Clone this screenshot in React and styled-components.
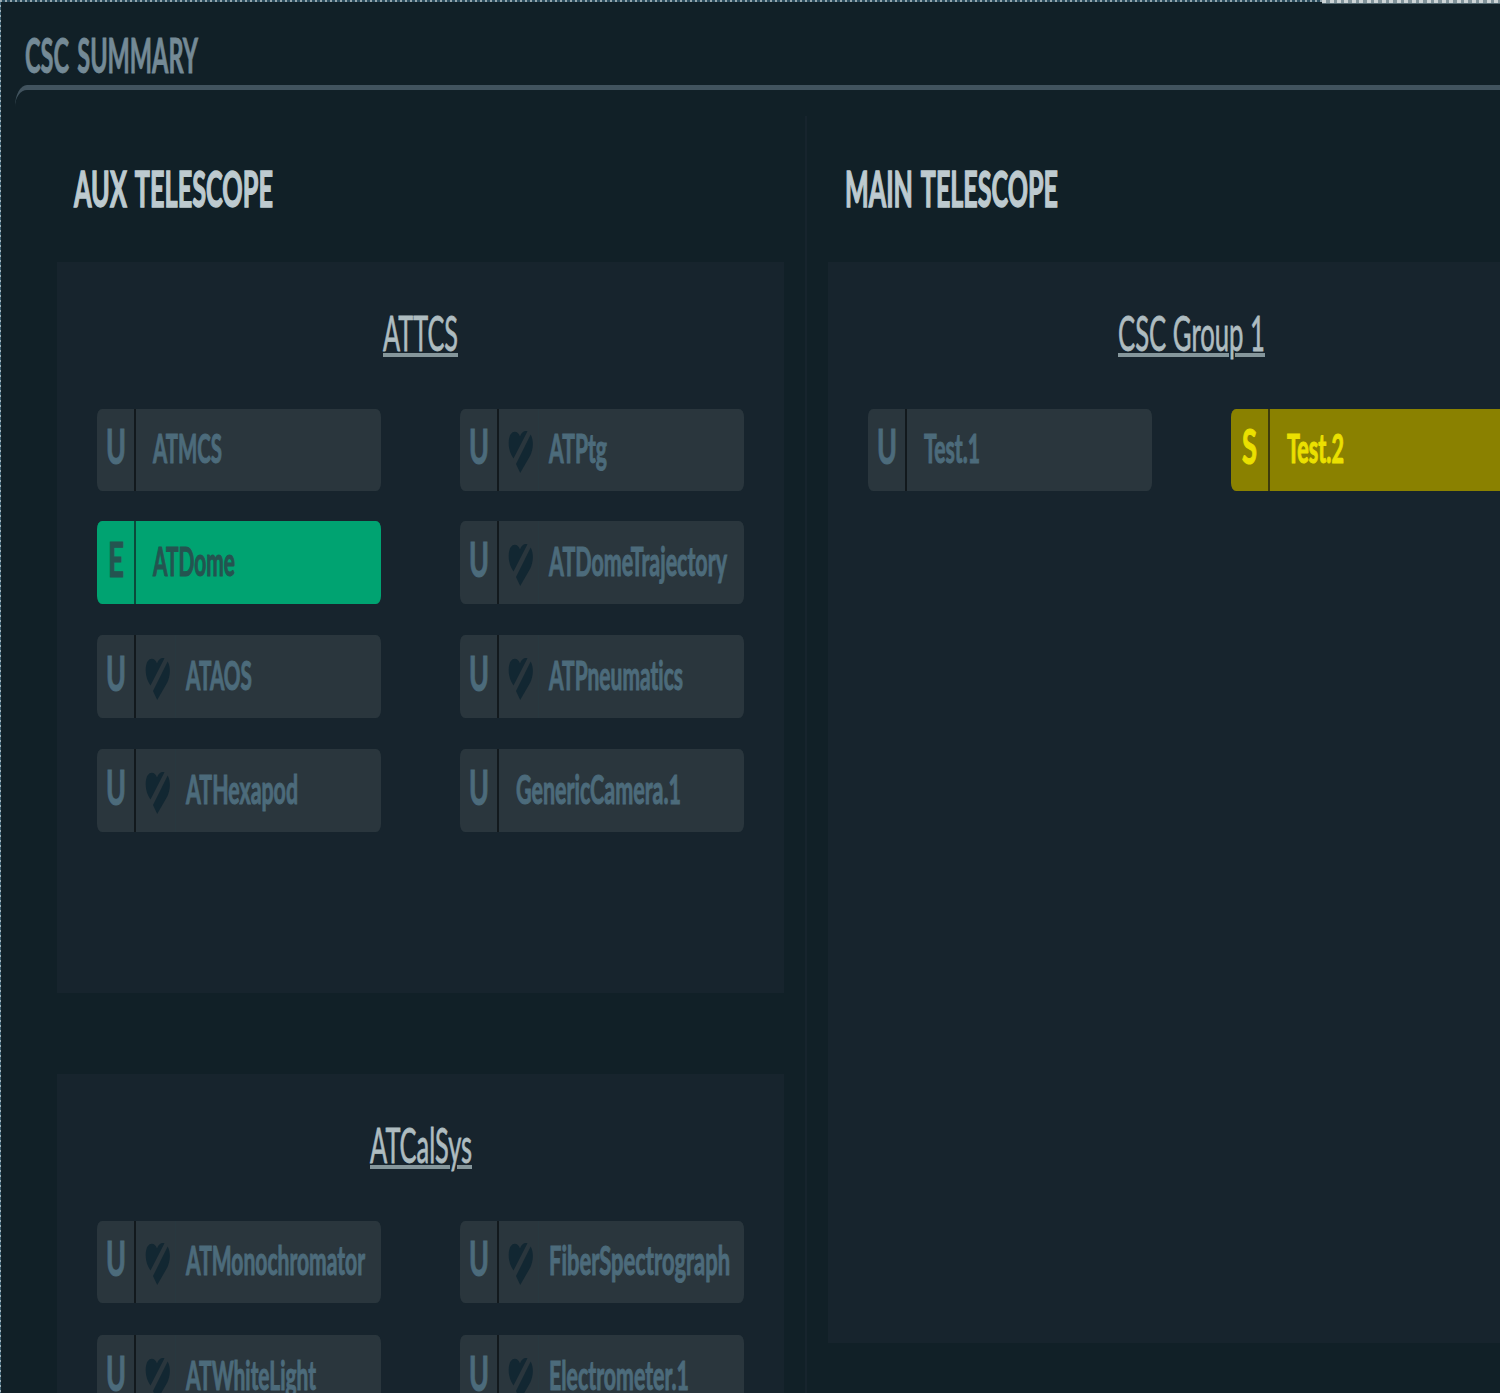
import React, { useLayoutEffect, useRef, useState } from 'react';
import styled, { createGlobalStyle, css } from 'styled-components';

const GlobalStyle = createGlobalStyle`
  *, *::before, *::after { box-sizing: border-box; }
  body {
    margin: 0;
    background: #112027;
    font-family: Lato, "Open Sans", sans-serif;
    font-variant-ligatures: none;
  }
`;

const tones = {
  unknown: { bg: '#2a363d', fg: '#4c6b7b', line: '#12191d' },
  enabled: { bg: '#00a371', fg: '#245450', line: '#0b4a3b' },
  standby: { bg: '#8a8100', fg: '#ebe000', line: '#3e3b0b' },
};

const Page = styled.main`
  position: relative;
  width: 1500px;
  height: 1393px;
  overflow: hidden;
  background: #112027;
`;

const TopEdge = styled.div`
  position: absolute;
  inset: 0 0 auto 0;
  height: 4px;
  display: flex;
  opacity: 0.9;
`;

const EdgeDots = styled.div`
  flex: ${(p) => (p.$bright ? '0 0 178px' : '1')};
  height: ${(p) => (p.$bright ? 4 : 2)}px;
  background: ${(p) =>
    p.$bright
      ? 'repeating-linear-gradient(90deg, #e2e8ea 0 4px, #8fa1a8 4px 7.5px)'
      : 'repeating-linear-gradient(90deg, #a3b5bd 0 2px, #2c5062 2px 5px)'};
  border-bottom: ${(p) => (p.$bright ? '1px solid #5a707a' : '0')};
`;

const LeftEdge = styled.div`
  position: absolute;
  inset: 0 auto 0 0;
  width: 1px;
  background: repeating-linear-gradient(180deg, #9fb1b9 0 2px, #3d6173 2px 5px);
`;

const Header = styled.header`
  height: 85px;
  padding: 24px 0 0 25px;
  font-size: 47px;
  font-weight: 700;
  line-height: 62px;
  word-spacing: 5px;
  color: #748a96;
  -webkit-text-stroke: 0.9px;
`;

const Body = styled.section`
  display: flex;
  height: 1320px;
  margin-left: 15px;
  padding: 26px 0 0 42px;
  border-top: 5px solid #41535e;
  border-top-left-radius: 12px 22px;
`;

const Column = styled.section`
  flex: 0 0 ${(p) => p.$width}px;
  display: flex;
  flex-direction: column;
  ${(p) =>
    p.$divided &&
    css`
      padding-right: 21px;
      margin-right: 21px;
      border-right: 2px solid #17242d;
    `}
`;

const ColumnTitle = styled.h2`
  flex: none;
  height: 146px;
  margin: 0;
  padding-left: 17px;
  font-size: 49px;
  font-weight: 700;
  line-height: 144px;
  word-spacing: 5px;
  color: #bdcacf;
  -webkit-text-stroke: 1.5px;
`;

const Panel = styled.section`
  flex: none;
  height: ${(p) => p.$height}px;
  margin-bottom: 81px;
  padding: 0 40px;
  background: #17242d;
`;

const GroupTitle = styled.h3`
  display: flex;
  justify-content: center;
  height: 147px;
  margin: 0;
  font-size: 49px;
  font-weight: 400;
  line-height: 140px;
  color: #aebcc0;
  -webkit-text-stroke: 0.8px;
`;

const ChipGrid = styled.div`
  display: grid;
  grid-template-columns: 284px 284px;
  grid-template-rows: 81.5px 83px 83.5px 83.5px;
  gap: ${(p) => p.$rowGap}px 79px;
`;

const Chip = styled.div`
  display: flex;
  overflow: hidden;
  border-radius: 5px 5px 5px 5px / 8px 8px 8px 8px;
  background: ${(p) => tones[p.$tone].bg};
  color: ${(p) => tones[p.$tone].fg};
  font-weight: 700;
  -webkit-text-stroke: 1.1px;
`;

const State = styled.div`
  flex: 0 0 39px;
  display: flex;
  align-items: center;
  justify-content: center;
  padding-bottom: 9px;
  border-right: 2px solid ${(p) => tones[p.$tone].line};
  font-size: 48.5px;
  line-height: 60px;
`;

const Heartbeat = styled.div`
  flex: 0 0 40px;
  display: flex;
  align-items: center;
  padding: 5px 0 0 9px;
  border-right: 1px solid #28383f;

  svg {
    display: block;
    width: 26px;
    height: 44px;
    fill: #122732;
  }
`;

const Name = styled.div`
  display: flex;
  align-items: center;
  padding: 0 0 3px ${(p) => (p.$heart ? 10 : 17)}px;
  font-size: 40px;
  line-height: 56px;
`;

const FitBox = styled.span`
  display: inline-block;
  width: ${(p) => p.$width}px;
  vertical-align: top;
  white-space: nowrap;
`;

const FitText = styled.span`
  display: inline-block;
  transform-origin: 0 50%;
  ${(p) =>
    p.$underline &&
    css`
      text-decoration: underline;
      text-decoration-color: #85969b;
      text-decoration-thickness: 4px;
      text-underline-offset: 2px;
    `}
`;

// Condenses a line of text horizontally to the given width.
function Fit({ width, underline, children }) {
  const ref = useRef(null);
  const [scale, setScale] = useState(1);
  useLayoutEffect(() => {
    const natural = parseFloat(getComputedStyle(ref.current).width);
    if (natural) setScale(width / natural);
  }, [width, children]);
  return (
    <FitBox $width={width}>
      <FitText ref={ref} $underline={underline} style={{ transform: `scaleX(${scale})` }}>
        {children}
      </FitText>
    </FitBox>
  );
}

function HeartOff() {
  return (
    <svg viewBox="0 0 26 44" aria-hidden="true">
      <path d="M12 6.5C10 -.5 1 -1 .7 12.500C.5 19 2.500 24 5.500 28.500L19.500 1.300C16.500 .2 13.500 2 12 6.500Z" />
      <path d="M22.700 4.500C26 11 25.200 19 22.300 25.500L12.200 43L8 34Z" />
    </svg>
  );
}

const letterWidth = { U: 20, E: 16, S: 15 };

function Csc({ name, width, state = 'U', tone = 'unknown', heart = false }) {
  return (
    <Chip $tone={tone}>
      <State $tone={tone}>
        <Fit width={letterWidth[state]}>{state}</Fit>
      </State>
      {heart && (
        <Heartbeat>
          <HeartOff />
        </Heartbeat>
      )}
      <Name $heart={heart}>
        <Fit width={width}>{name}</Fit>
      </Name>
    </Chip>
  );
}

function Group({ title, titleWidth, height, items, rowGap = 30.5 }) {
  return (
    <Panel $height={height}>
      <GroupTitle>
        <Fit width={titleWidth} underline>
          {title}
        </Fit>
      </GroupTitle>
      <ChipGrid $rowGap={rowGap}>
        {items.map((item) => (
          <Csc key={item.name} {...item} />
        ))}
      </ChipGrid>
    </Panel>
  );
}

const attcs = [
  { name: 'ATMCS', width: 69 },
  { name: 'ATPtg', width: 58, heart: true },
  { name: 'ATDome', width: 82, state: 'E', tone: 'enabled' },
  { name: 'ATDomeTrajectory', width: 178, heart: true },
  { name: 'ATAOS', width: 66, heart: true },
  { name: 'ATPneumatics', width: 134, heart: true },
  { name: 'ATHexapod', width: 112, heart: true },
  { name: 'GenericCamera.1', width: 165 },
];

const atcalsys = [
  { name: 'ATMonochromator', width: 179, heart: true },
  { name: 'FiberSpectrograph', width: 181, heart: true },
  { name: 'ATWhiteLight', width: 130, heart: true },
  { name: 'Electrometer.1', width: 140, heart: true },
];

const group1 = [
  { name: 'Test.1', width: 56 },
  { name: 'Test.2', width: 57, state: 'S', tone: 'standby' },
];

export default function App() {
  return (
    <Page>
      <GlobalStyle />
      <Header>
        <Fit width={173}>CSC SUMMARY</Fit>
      </Header>
      <Body>
        <Column $width={750} $divided>
          <ColumnTitle>
            <Fit width={199}>AUX TELESCOPE</Fit>
          </ColumnTitle>
          <Group title="ATTCS" titleWidth={75} height={731} items={attcs} />
          <Group title="ATCalSys" titleWidth={102} height={731} items={atcalsys} rowGap={32} />
        </Column>
        <Column $width={727}>
          <ColumnTitle>
            <Fit width={213}>MAIN TELESCOPE</Fit>
          </ColumnTitle>
          <Group title="CSC Group 1" titleWidth={147} height={1081} items={group1} />
        </Column>
      </Body>
      <TopEdge>
        <EdgeDots />
        <EdgeDots $bright />
      </TopEdge>
      <LeftEdge />
    </Page>
  );
}
